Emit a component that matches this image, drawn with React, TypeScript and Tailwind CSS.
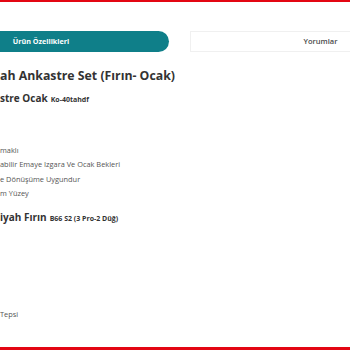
const features = [
  "",
  "",
  "maklı",
  "abilir Emaye Izgara Ve Ocak Bekleri",
  "e Dönüşüme Uygundur",
  "m Yüzey",
]

const ovenFeatures = ["", "", "", "", "", "Tepsi"]

export default function App() {
  return (
    <div
      className="relative flex h-[350px] w-[350px] flex-col overflow-hidden border-t-2 border-b-[3px] border-t-[#e30613] border-b-[#e30613] bg-white text-[#333]"
      style={{ fontFamily: '"Open Sans", "Noto Sans", sans-serif' }}
    >
      <div className="ml-[-92px] mt-[29px] flex shrink-0 gap-[21px]">
        <div className="flex h-[21px] w-[261px] shrink-0 items-center justify-center rounded-r-full bg-[#0f7f89] pl-[5px] text-[7.2px] font-bold text-white">
          Ürün Özellikleri
        </div>
        <div className="flex h-[21px] w-[261px] shrink-0 items-center justify-center border border-[#f0f0f0] bg-white text-[7.5px] font-semibold text-[#4a4a4a]">
          Yorumlar
        </div>
      </div>

      <div className="flex flex-col">
        <h2 className="mt-[15px] whitespace-nowrap text-[12.3px] font-bold leading-[18px] text-[#333]">
          ah Ankastre Set (Fırın- Ocak)
        </h2>
        <h3 className="mt-[6px] flex items-baseline gap-[3px] whitespace-nowrap text-[10px] font-bold leading-[14px] text-[#333]">
          stre Ocak <span className="text-[7px]">Ko-40tahdf</span>
        </h3>

        <ul className="mt-[7px] flex flex-col text-[7.4px] leading-[14.4px] text-[#555]">
          {features.map((f, i) => (
            <li key={i} className="h-[14.4px] whitespace-nowrap">
              {f}
            </li>
          ))}
        </ul>

        <h3 className="mt-[10px] flex items-baseline gap-[3px] whitespace-nowrap text-[10px] font-bold leading-[14px] text-[#333]">
          iyah Fırın <span className="text-[7px]">B66 S2 (3 Pro-2 Düğ)</span>
        </h3>

        <ul className="mt-[9px] flex flex-col text-[7.4px] leading-[14.4px] text-[#555]">
          {ovenFeatures.map((f, i) => (
            <li key={i} className="h-[14.4px] whitespace-nowrap">
              {f}
            </li>
          ))}
        </ul>
      </div>
    </div>
  )
}
